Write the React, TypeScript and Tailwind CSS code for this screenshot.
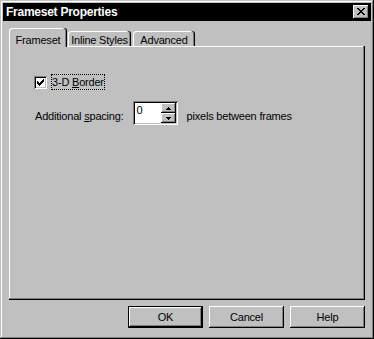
import React from "react";

function Pix({ rows }: { rows: string[] }) {
  const w = rows[0].length;
  const h = rows.length;
  return (
    <svg width={w} height={h} viewBox={`0 0 ${w} ${h}`} shapeRendering="crispEdges" className="block">
      {rows.flatMap((r, y) =>
        r.split("").map((c, x) =>
          c === "#" ? <rect key={`${x}-${y}`} x={x} y={y} width={1} height={1} fill="#000" /> : null
        )
      )}
    </svg>
  );
}

const CLOSE = ["##....##", ".##..##.", "..####..", "...##...", "..####..", ".##..##.", "##....##"];
const CHECK = ["......#", ".....##", "#...###", "##.###.", "#####..", ".###...", "..#...."];
const UP = ["..#..", ".###.", "#####"];
const DOWN = ["#####", ".###.", "..#.."];

const raised =
  "shadow-[inset_-1px_-1px_#000,inset_1px_1px_#fff,inset_-2px_-2px_#808080]";

export default function App() {
  return (
    <div className="w-[374px] h-[339px] bg-[#c0c0c0] p-[3px] flex flex-col font-['Liberation_Sans',Arial,sans-serif] text-[11px] leading-[13px] tracking-[-0.2px] text-black shadow-[inset_-1px_-1px_#000,inset_1px_1px_#c0c0c0,inset_-2px_-2px_#808080,inset_2px_2px_#fff]">
      {/* Title bar */}
      <div className="h-[18px] bg-black flex items-center justify-between pl-[3px] pr-[2px]">
        <span className="text-white font-bold text-[12px] tracking-[-0.25px] leading-[14px]">Frameset Properties</span>
        <div className={`w-[16px] h-[14px] bg-[#c0c0c0] flex items-start justify-start pl-[4px] pt-[3px] ${raised}`}>
          <Pix rows={CLOSE} />
        </div>
      </div>

      <div className="flex flex-col px-[6px] mt-[7px]">
        {/* Tabs */}
        <div className="flex items-end h-[18px]">
          <div className="relative z-10 w-[58px] h-[19px] -mb-px bg-[#c0c0c0] rounded-t-[3px] pt-[6px] flex justify-center shadow-[inset_-1px_0_#000,inset_-2px_0_#808080,inset_1px_1px_#fff]">
            <span>Frameset</span>
          </div>
          <div className="ml-[1px] w-[63px] h-[15px] bg-[#c0c0c0] rounded-t-[3px] pt-[3px] flex justify-center shadow-[inset_-1px_0_#000,inset_-2px_0_#808080,inset_1px_1px_#fff]">
            <span>Inline Styles</span>
          </div>
          <div className="ml-[2px] w-[62px] h-[15px] bg-[#c0c0c0] rounded-t-[3px] pt-[3px] flex justify-center shadow-[inset_-1px_0_#000,inset_-2px_0_#808080,inset_1px_1px_#fff]">
            <span>Advanced</span>
          </div>
        </div>

        {/* Panel */}
        <div className="h-[254px] bg-[#c0c0c0] pt-[28px] pl-[25px] flex flex-col shadow-[inset_-1px_-1px_#000,inset_-2px_-2px_#808080,inset_1px_1px_#fff]">
          <div className="flex items-center h-[16px]">
            <div className="w-[13px] h-[13px] bg-white flex items-center justify-center shadow-[inset_1px_1px_#808080,inset_-1px_-1px_#fff,inset_2px_2px_#000,inset_-2px_-2px_#c0c0c0]">
              <Pix rows={CHECK} />
            </div>
            <div className="ml-[4px] h-[16px] border border-dotted border-black flex items-center">
              <span>
                3-D <span className="underline underline-offset-[1px]">B</span>order
              </span>
            </div>
          </div>

          <div className="flex items-start mt-[11px]">
            <span className="ml-[1px] mt-[9px]">
              Additional <span className="underline underline-offset-[1px]">s</span>pacing:
            </span>
            <div className="ml-[9px] w-[45px] h-[24px] bg-white flex p-[2px] shadow-[inset_1px_1px_#808080,inset_-1px_-1px_#fff,inset_2px_2px_#000,inset_-2px_-2px_#c0c0c0]">
              <div className="flex-1 pl-[2px] pt-[1px]">0</div>
              <div className="w-[15px] flex flex-col">
                <div className={`h-[10px] bg-[#c0c0c0] flex items-center justify-center ${raised}`}>
                  <Pix rows={UP} />
                </div>
                <div className={`h-[10px] bg-[#c0c0c0] flex items-center justify-center ${raised}`}>
                  <Pix rows={DOWN} />
                </div>
              </div>
            </div>
            <span className="ml-[9px] mt-[9px]">pixels between frames</span>
          </div>
        </div>

        {/* Buttons */}
        <div className="flex justify-end gap-[6px] mt-[6px]">
          <div className="w-[75px] h-[22px] border border-black bg-[#c0c0c0] flex items-center justify-center shadow-[inset_-1px_-1px_#000,inset_1px_1px_#fff,inset_-2px_-2px_#808080]">
            OK
          </div>
          <div className={`w-[75px] h-[22px] bg-[#c0c0c0] flex items-center justify-center ${raised}`}>Cancel</div>
          <div className={`w-[75px] h-[22px] bg-[#c0c0c0] flex items-center justify-center ${raised}`}>Help</div>
        </div>
      </div>
    </div>
  );
}
